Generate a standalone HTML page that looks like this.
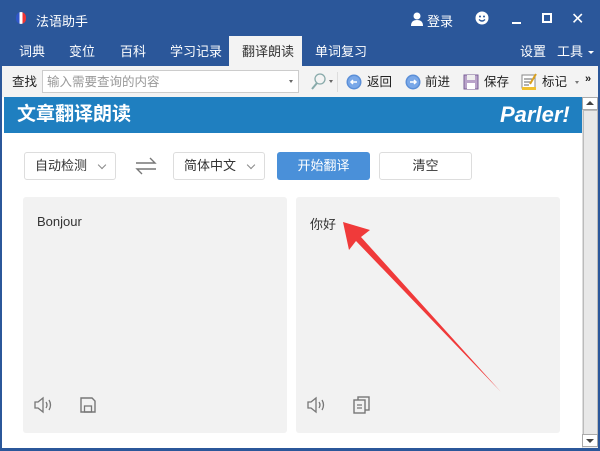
<!DOCTYPE html>
<html><head><meta charset="utf-8">
<style>
*{margin:0;padding:0;box-sizing:border-box}
body{width:600px;height:451px;overflow:hidden;background:#2b579a;font-family:"Liberation Sans","Noto Sans CJK SC",sans-serif;position:relative}
.a{position:absolute}
.w{color:#fff;font-size:13px}
.tab{position:absolute;top:37px;height:30px;line-height:30px;color:#fff;font-size:13px}
.tb{font-size:12.5px;color:#222;top:72px;line-height:20px}
.sel{position:absolute;top:152px;height:28px;background:#fff;border:1px solid #ddd;border-radius:3px;font-size:13px;color:#333;line-height:26px;padding-left:10px}
.sel:after{content:"";position:absolute;right:10px;top:9px;width:5px;height:5px;border-right:1px solid #888;border-bottom:1px solid #888;transform:rotate(45deg)}
.panel{position:absolute;top:197px;height:236px;background:#f2f2f2;border-radius:3px}
</style></head><body>
<!-- title -->
<div class="a" style="left:16px;top:12px;width:10px;height:12px;border-radius:5px;background:linear-gradient(90deg,#2f56c8 33%,#fff 33% 66%,#e33 66%)"></div>
<div class="a w" style="left:36px;top:11px;font-size:13px">法语助手</div>
<svg class="a" style="left:411px;top:12px" width="12" height="14"><circle cx="6" cy="4" r="3.5" fill="#fff"/><path d="M0 14 Q0 8 6 8 Q12 8 12 14Z" fill="#fff"/></svg>
<div class="a w" style="left:427px;top:11px">登录</div>
<svg class="a" style="left:475px;top:11px" width="14" height="14"><circle cx="7" cy="7" r="6.5" fill="#fff"/><circle cx="5" cy="5.5" r="1" fill="#2b579a"/><circle cx="9" cy="5.5" r="1" fill="#2b579a"/><path d="M4 8.5 Q7 11.5 10 8.5" stroke="#2b579a" stroke-width="1.3" fill="none"/></svg>
<div class="a" style="left:512px;top:22px;width:9px;height:2px;background:#fff"></div>
<div class="a" style="left:542px;top:13px;width:10px;height:10px;border:2px solid #fff"></div>
<div class="a w" style="left:571px;top:9px;font-size:16px">✕</div>
<!-- tabs -->
<div class="tab" style="left:19px">词典</div>
<div class="tab" style="left:69px">变位</div>
<div class="tab" style="left:120px">百科</div>
<div class="tab" style="left:170px">学习记录</div>
<div class="a" style="left:229px;top:36px;width:73px;height:30px;background:#f3f3f3"></div>
<div class="tab" style="left:242px;color:#333">翻译朗读</div>
<div class="tab" style="left:315px">单词复习</div>
<div class="tab" style="left:520px">设置</div>
<div class="tab" style="left:557px">工具</div>
<div class="a" style="left:588px;top:51px;border:3px solid transparent;border-top:3px solid #fff"></div>
<!-- toolbar -->
<div class="a" style="left:2px;top:66px;width:596px;height:31px;background:#f3f3f3"></div>
<div class="a tb" style="left:12px">查找</div>
<div class="a" style="left:42px;top:70px;width:257px;height:23px;background:#fff;border:1px solid #ccc"></div>
<div class="a tb" style="left:47px;color:#999">输入需要查询的内容</div>
<div class="a" style="left:289px;top:80px;border:2.5px solid transparent;border-top:3px solid #666"></div>
<svg class="a" style="left:310px;top:72px" width="16" height="20"><circle cx="10" cy="7" r="5" fill="none" stroke="#8aa" stroke-width="1.3"/><path d="M7 11 L2 17" stroke="#8aa" stroke-width="2"/></svg>
<div class="a" style="left:329px;top:80px;border:2.5px solid transparent;border-top:3px solid #666"></div>
<div class="a" style="left:337px;top:72px;width:1px;height:20px;background:#ddd"></div>
<svg class="a" style="left:346px;top:74px" width="16" height="16"><circle cx="8" cy="8" r="7.5" fill="#5b8fd8"/><circle cx="8" cy="8" r="6" fill="#7aa8e8"/><path d="M11 8H5M7 6 5 8 7 10" stroke="#fff" stroke-width="1.5" fill="none"/></svg>
<div class="a tb" style="left:367px">返回</div>
<svg class="a" style="left:405px;top:74px" width="16" height="16"><circle cx="8" cy="8" r="7.5" fill="#5b8fd8"/><circle cx="8" cy="8" r="6" fill="#7aa8e8"/><path d="M5 8H11M9 6 11 8 9 10" stroke="#fff" stroke-width="1.5" fill="none"/></svg>
<div class="a tb" style="left:425px">前进</div>
<svg class="a" style="left:463px;top:74px" width="16" height="16"><rect x="1" y="1" width="14" height="14" fill="#b9a3c9" stroke="#7a5f96"/><rect x="4" y="1" width="8" height="5" fill="#eee"/><rect x="4" y="9" width="8" height="6" fill="#fff"/></svg>
<div class="a tb" style="left:484px">保存</div>
<svg class="a" style="left:521px;top:73px" width="17" height="18"><rect x="1" y="2" width="13" height="13" fill="#fff" stroke="#888"/><path d="M3 6h8M3 9h7M3 12h5" stroke="#666"/><rect x="1" y="14" width="14" height="3" fill="#f0c030"/><path d="M15 1 L9 11" stroke="#d9a020" stroke-width="2"/></svg>
<div class="a tb" style="left:542px">标记</div>
<div class="a" style="left:575px;top:81px;border:2.5px solid transparent;border-top:3px solid #777"></div>
<div class="a" style="left:585px;top:73px;font-size:11px;color:#222;font-weight:bold">»</div>
<!-- content -->
<div class="a" style="left:2px;top:97px;width:596px;height:351px;background:#fff"></div>
<div class="a" style="left:4px;top:97px;width:578px;height:36px;background:#1f7fc0"></div>
<div class="a" style="left:17px;top:103px;color:#fff;font-size:19px;font-weight:bold;line-height:24px">文章翻译朗读</div>
<div class="a" style="left:500px;top:101px;color:#fff;font-size:22px;font-weight:bold;font-style:italic;line-height:28px">Parler!</div>
<!-- scrollbar -->
<div class="a" style="left:582px;top:97px;width:16px;height:351px;background:#f0f0f0;border-left:1px solid #ddd"></div>
<div class="a" style="left:583px;top:110px;width:15px;height:330px;background:#e8e8e8;border:1px solid #bbb"></div>
<div class="a" style="left:582px;top:97px;width:16px;height:13px;background:#fff;border:1px solid #aaa"></div>
<div class="a" style="left:586px;top:101px;border:4px solid transparent;border-bottom:4px solid #444;border-top:0"></div>
<div class="a" style="left:582px;top:434px;width:16px;height:13px;background:#fff;border:1px solid #aaa"></div>
<div class="a" style="left:586px;top:439px;border:4px solid transparent;border-top:4px solid #444;border-bottom:0"></div>
<!-- controls -->
<div class="sel" style="left:24px;width:92px">自动检测</div>
<svg class="a" style="left:135px;top:157px" width="22" height="18"><path d="M1 6H20L15 1M21 12H2L7 17" stroke="#777" stroke-width="1.4" fill="none"/></svg>
<div class="sel" style="left:173px;width:92px">简体中文</div>
<div class="a" style="left:277px;top:152px;width:93px;height:28px;background:#4a90d9;border-radius:3px;color:#fff;font-size:13px;line-height:28px;text-align:center">开始翻译</div>
<div class="a" style="left:379px;top:152px;width:93px;height:28px;background:#fff;border:1px solid #ddd;border-radius:3px;color:#333;font-size:13px;line-height:26px;text-align:center">清空</div>
<!-- panels -->
<div class="panel" style="left:23px;width:264px"></div>
<div class="panel" style="left:296px;width:264px"></div>
<div class="a" style="left:37px;top:214px;font-size:13px;color:#333">Bonjour</div>
<div class="a" style="left:310px;top:214px;font-size:13px;color:#333">你好</div>
<svg class="a" style="left:34px;top:396px" width="20" height="18"><path d="M1 6H4L9 2V16L4 12H1Z" fill="none" stroke="#777" stroke-width="1.3"/><path d="M12 6Q14 9 12 12M15 4Q18 9 15 14" fill="none" stroke="#777" stroke-width="1.3"/></svg>
<svg class="a" style="left:80px;top:397px" width="16" height="16"><path d="M1 1H12L15 4V15H1Z" fill="none" stroke="#777" stroke-width="1.4"/><rect x="4.5" y="9" width="7" height="6" fill="none" stroke="#777" stroke-width="1.3"/></svg>
<svg class="a" style="left:307px;top:396px" width="20" height="18"><path d="M1 6H4L9 2V16L4 12H1Z" fill="none" stroke="#777" stroke-width="1.3"/><path d="M12 6Q14 9 12 12M15 4Q18 9 15 14" fill="none" stroke="#777" stroke-width="1.3"/></svg>
<svg class="a" style="left:353px;top:396px" width="18" height="18"><rect x="5" y="1" width="11" height="13" fill="none" stroke="#777" stroke-width="1.4"/><rect x="1" y="4" width="11" height="13" fill="#f2f2f2" stroke="#777" stroke-width="1.4"/><path d="M4 9H9M4 12H9" stroke="#777" stroke-width="1.2"/></svg>
<!-- arrow -->
<svg class="a" style="left:0;top:0" width="600" height="451"><path d="M343 222 L370 230 L361 237 L501 392 L356 241 L349 250 Z" fill="#f03a3a"/></svg>
</body></html>
